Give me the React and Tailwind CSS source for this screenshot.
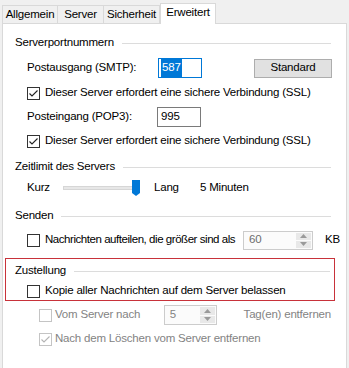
import React from 'react'

function Check({ checked, disabled }) {
  return (
    <span
      className={`flex h-[13px] w-[13px] shrink-0 items-center justify-center border bg-white ${
        disabled ? 'border-[#c4c4c4]' : 'border-[#333333]'
      }`}
    >
      {checked && (
        <svg width="11" height="11" viewBox="0 0 11 11">
          <path
            d="M1.5 5.5 L4 8 L9.5 2.5"
            fill="none"
            stroke={disabled ? '#b4b4b4' : '#222222'}
            strokeWidth="1.1"
          />
        </svg>
      )}
    </span>
  )
}

function GroupHeader({ label, pl = 'pl-[12px]' }) {
  return (
    <div className={`flex h-[14px] items-center gap-[8px] ${pl}`}>
      <span>{label}</span>
      <span className="h-px flex-1 bg-[#dcdcdc]" />
    </div>
  )
}

function Spinner() {
  return (
    <div className="flex h-full w-[16px] shrink-0 flex-col gap-px py-px pr-px">
      <span className="flex flex-1 items-center justify-center bg-[#e8e8e8]">
        <svg width="7" height="4" viewBox="0 0 7 4">
          <path d="M0 4 L3.5 0 L7 4 Z" fill="#9a9a9a" />
        </svg>
      </span>
      <span className="flex flex-1 items-center justify-center bg-[#e8e8e8]">
        <svg width="7" height="4" viewBox="0 0 7 4">
          <path d="M0 0 L3.5 4 L7 0 Z" fill="#9a9a9a" />
        </svg>
      </span>
    </div>
  )
}

export default function App() {
  const tabs = [
    ['Allgemein', 'w-[56px] border-l'],
    ['Server', 'w-[46px]'],
    ['Sicherheit', 'w-[56px]'],
  ]

  return (
    <div
      className="flex h-[368px] w-[349px] flex-col overflow-hidden whitespace-nowrap bg-[#f0f0f0] text-[11.5px] tracking-[-0.2px] text-black"
      style={{ fontFamily: '"Liberation Sans", Arial, sans-serif' }}
    >
      {/* tab strip */}
      <div className="flex h-[23px] items-end pl-[2px]">
        {tabs.map(([t, cls]) => (
          <div
            key={t}
            className={`flex h-[18px] items-center justify-center border-t border-r border-[#d9d9d9] ${cls}`}
          >
            {t}
          </div>
        ))}
        <div className="relative z-10 -mb-px flex h-[21px] w-[56px] items-center justify-center border-x border-t border-[#d9d9d9] bg-white pb-[2px]">
          Erweitert
        </div>
      </div>

      {/* panel */}
      <div className="mx-[2px] flex-1 border border-b-0 border-[#d9d9d9] bg-white pr-[15px]">
        <div className="mt-[12px]">
          <GroupHeader label="Serverportnummern" />
        </div>

        <div className="mt-[8px] flex h-[20px] items-center pl-[24px]">
          <span className="w-[131px]">Postausgang (SMTP):</span>
          <span className="flex h-[20px] w-[44px] items-center border border-[#0078d7] px-[2px]">
            <span className="bg-[#0078d7] px-px text-white">587</span>
          </span>
          <button
            type="button"
            className="ml-auto mr-[-1px] flex h-[19px] w-[78px] items-center justify-center border border-[#adadad] bg-[#e1e1e1]"
          >
            Standard
          </button>
        </div>

        <div className="mt-[7px] flex h-[16px] items-center gap-[5px] pl-[24px]">
          <Check checked />
          <span>Dieser Server erfordert eine sichere Verbindung (SSL)</span>
        </div>

        <div className="mt-[6px] flex h-[20px] items-center pl-[24px]">
          <span className="w-[130px]">Posteingang (POP3):</span>
          <span className="flex h-[20px] w-[44px] items-center border border-[#7a7a7a] px-[3px]">
            995
          </span>
        </div>

        <div className="mt-[6px] flex h-[16px] items-center gap-[5px] pl-[24px]">
          <Check checked />
          <span>Dieser Server erfordert eine sichere Verbindung (SSL)</span>
        </div>

        <div className="mt-[11px]">
          <GroupHeader label="Zeitlimit des Servers" />
        </div>

        <div className="mt-[6px] flex h-[16px] items-center pl-[24px]">
          <span className="w-[36px]">Kurz</span>
          <div className="flex h-[16px] w-[78px] items-center">
            <span className="h-[4px] w-[70px] border border-[#d6d6d6] bg-[#e7e7e7]" />
            <svg width="8" height="16" viewBox="0 0 8 16" className="-ml-px">
              <path d="M0 0 H8 V13 L4 16 L0 13 Z" fill="#0078d7" />
            </svg>
          </div>
          <span className="ml-[13px] w-[46px]">Lang</span>
          <span>5 Minuten</span>
        </div>

        <div className="mt-[13px]">
          <GroupHeader label="Senden" />
        </div>

        <div className="mr-[-8px] mt-[7px] flex h-[20px] items-center pl-[24px]">
          <Check />
          <span className="ml-[5px] tracking-[-0.45px]">
            Nachrichten aufteilen, die größer sind als
          </span>
          <span className="ml-auto flex h-[19px] w-[70px] items-center border border-[#cccccc] bg-[#fbfbfb] pl-[5px] text-[#6d6d6d]">
            <span className="flex-1">60</span>
            <Spinner />
          </span>
          <span className="ml-[12px] w-[14px]">KB</span>
        </div>

        <div className="ml-[2px] mr-[-4px] mt-[8px] border border-[#c8323a] pb-[1px] pr-[4px]">
          <div className="mt-[5px]">
            <GroupHeader label="Zustellung" pl="pl-[9px]" />
          </div>
          <div className="mt-[5px] flex h-[16px] items-center gap-[5px] pl-[21px]">
            <Check />
            <span>Kopie aller Nachrichten auf dem Server belassen</span>
          </div>
        </div>

        <div className="mt-[4px] flex h-[20px] items-center pl-[36px] text-[#838383]">
          <Check disabled />
          <span className="ml-[3px] w-[111px]">Vom Server nach</span>
          <span className="flex h-[20px] w-[54px] items-center border border-[#cccccc] bg-[#fbfbfb] pl-[5px]">
            <span className="flex-1">5</span>
            <Spinner />
          </span>
          <span className="ml-[27px]">Tag(en) entfernen</span>
        </div>

        <div className="mt-[6px] flex h-[16px] items-center gap-[3px] pl-[36px] text-[#838383]">
          <Check checked disabled />
          <span>Nach dem Löschen vom Server entfernen</span>
        </div>
      </div>
    </div>
  )
}
